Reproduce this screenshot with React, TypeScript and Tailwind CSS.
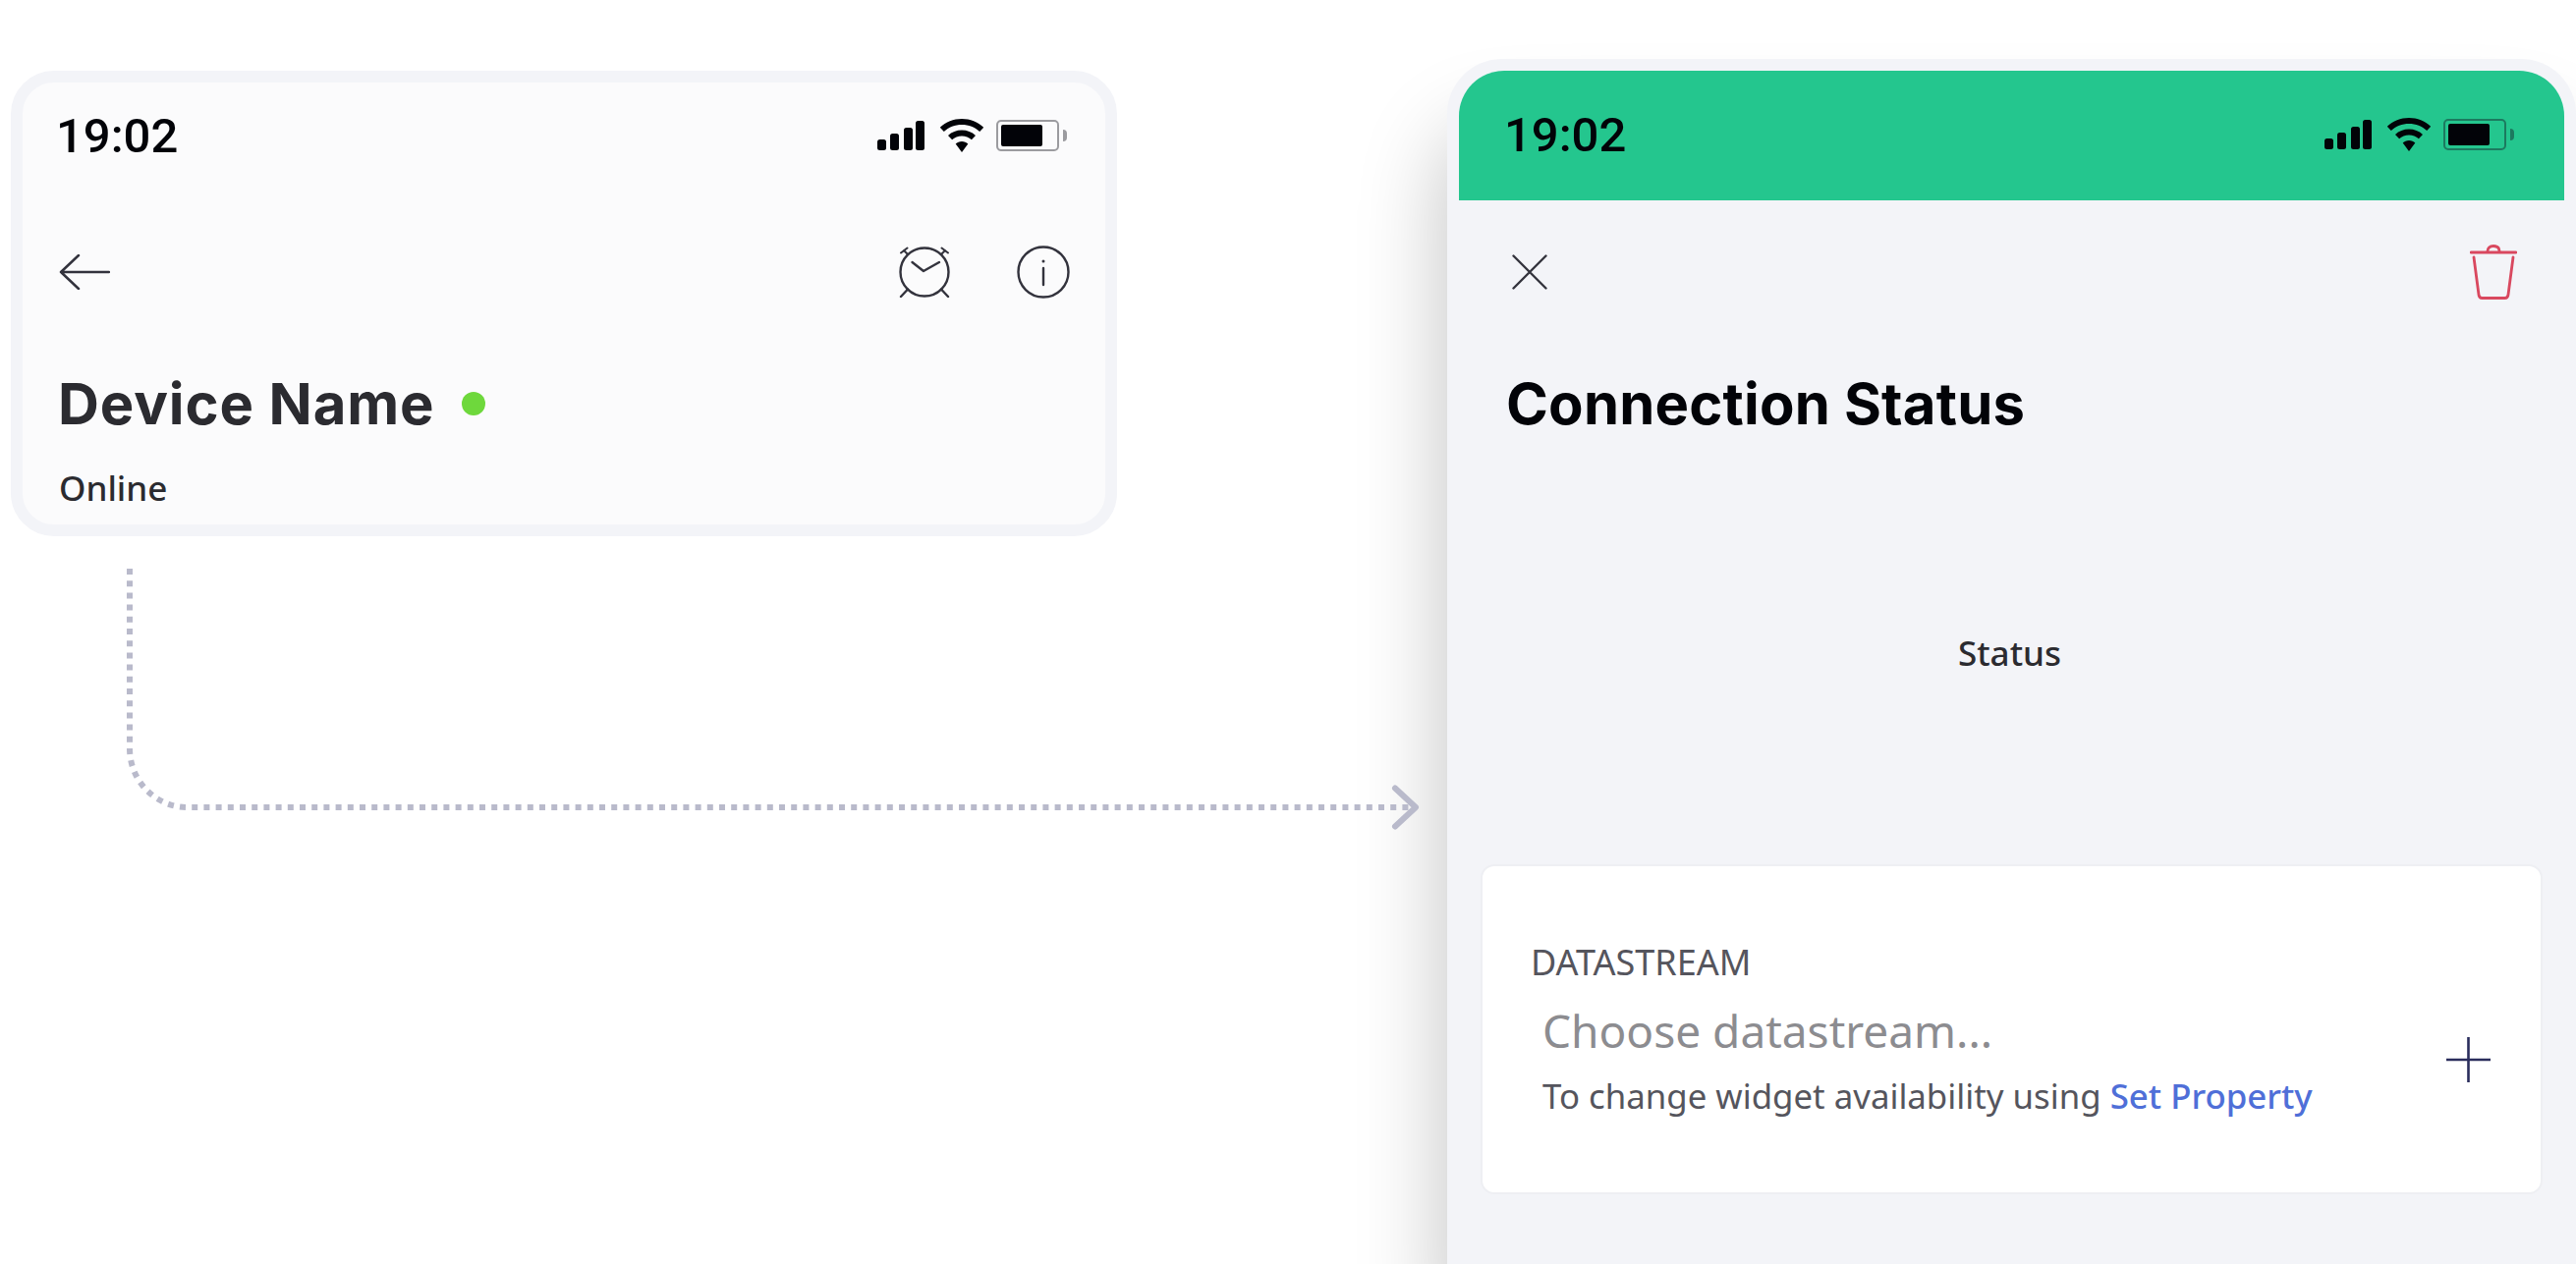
const headingFont = "font-['Inter','Lato',sans-serif]";
const bodyFont = "font-['Noto_Sans','Open_Sans',sans-serif]";

function StatusIcons({ batteryClass, nubClass }: { batteryClass: string; nubClass: string }) {
  return (
    <div className="flex items-center">
      <svg width="48" height="30" viewBox="0 0 48 30" fill="currentColor" className="text-[#020308]">
        <rect x="0" y="19" width="9" height="11" rx="2.5" />
        <rect x="13" y="13" width="9" height="17" rx="2.5" />
        <rect x="27" y="7" width="9" height="23" rx="2.5" />
        <rect x="39" y="0" width="9" height="30" rx="2.5" />
      </svg>
      <svg width="46" height="34" viewBox="0 0 46 34" fill="currentColor" className="ml-[15px] text-[#020308]">
        <path d="M23 0C14.5 0 6.7 3.3.8 8.8l4 4.2C9.6 8.6 16 6 23 6s13.4 2.6 18.2 7l4-4.2C39.3 3.3 31.5 0 23 0z" />
        <path d="M23 11.5c-5.4 0-10.3 2-14 5.4l4.1 4.3c2.6-2.3 6.1-3.7 9.9-3.7s7.3 1.4 9.9 3.7l4.1-4.3c-3.7-3.4-8.6-5.4-14-5.4z" />
        <path d="M23 23c-2.5 0-4.7.9-6.3 2.5L23 34l6.3-8.5C27.7 23.9 25.5 23 23 23z" />
      </svg>
      <div className={`ml-[12px] flex h-[32px] w-[64px] items-center rounded-[5px] border-[2.5px] p-[3px] ${batteryClass}`}>
        <div className="h-full w-[42px] rounded-[2px] bg-[#020308]" />
      </div>
      <div className={`ml-[4px] h-[12px] w-[4px] rounded-r-full ${nubClass}`} />
    </div>
  );
}

function AlarmIcon() {
  return (
    <svg width="52" height="52" viewBox="0 0 52 52" fill="none" stroke="#33333d" strokeWidth="2.4" strokeLinecap="round" strokeLinejoin="round">
      <circle cx="26" cy="26" r="24.5" />
      <path d="M13.5 16L25 25l16-9" />
      <path d="M2 6.500l6.500-5M5 4l4 4M50 6.500l-6.500-5M47 4l-4 4" strokeWidth="2" />
      <path d="M9 43.500L2 51M43 43.500l7 7.500" />
    </svg>
  );
}

function InfoIcon() {
  return (
    <svg width="54" height="54" viewBox="0 0 54 54" fill="none" stroke="#33333d" strokeWidth="2.4" strokeLinecap="round">
      <circle cx="27" cy="27" r="25.5" />
      <path d="M27 23v17" />
      <circle cx="27" cy="16" r="1.5" fill="#33333d" stroke="none" />
    </svg>
  );
}

function BackArrow() {
  return (
    <svg width="52" height="36" viewBox="0 0 52 36" fill="none" stroke="#33333d" strokeWidth="2.5" strokeLinecap="round" strokeLinejoin="round">
      <path d="M2 18h49M20 1L2 18l18 17" />
    </svg>
  );
}

function CloseIcon() {
  return (
    <svg width="36" height="36" viewBox="0 0 36 36" fill="none" stroke="#33333d" strokeWidth="2.4" strokeLinecap="round">
      <path d="M1.500 1.500l33 33M34.500 1.500l-33 33" />
    </svg>
  );
}

function TrashIcon() {
  return (
    <svg width="48" height="56" viewBox="0 0 48 56" fill="none" stroke="#d9485f" strokeWidth="2.8" strokeLinecap="round" strokeLinejoin="round">
      <path d="M1 8h46" />
      <path d="M18 7c0-3.500 2-5.500 6-5.500s6 2 6 5.500" />
      <path d="M4 13l5 38c.2 2 1.500 3.500 3.500 3.500h23c2 0 3.300-1.500 3.500-3.500l5-38" />
    </svg>
  );
}

// dotted line running from the device card over to the widget settings
function Connector() {
  return (
    <svg className="pointer-events-none absolute left-0 top-0" width="1480" height="860" viewBox="0 0 1480 860" fill="none" stroke="#b9bacb">
      <path d="M132 579V762C132 795 158 822 191 822H1434" strokeWidth="6" strokeDasharray="6 6.200" />
      <path d="M1420 802.500l21 19.500-21 19.500" strokeWidth="6" strokeLinecap="round" strokeLinejoin="round" />
    </svg>
  );
}

export default function App() {
  return (
    <div className="relative flex h-[1287px] w-[2622px] items-start overflow-hidden bg-white">
      <div className="ml-[11px] mt-[72px] h-[474px] w-[1126px] shrink-0 rounded-[44px] border-[12px] border-[#f3f4f8] bg-[#fbfbfc]">
        <div className="flex h-[108px] items-center justify-between pl-[34px] pr-[39px]">
          <span className="font-['Roboto',sans-serif] text-[49px] font-medium leading-none text-[#020308]">19:02</span>
          <StatusIcons batteryClass="border-[#9b9b9f]" nubClass="bg-[#9b9b9f]" />
        </div>
        <div className="mt-[57px] flex h-[56px] items-center justify-between pl-[37px] pr-[36px]">
          <BackArrow />
          <div className="flex items-center gap-[68px]">
            <AlarmIcon />
            <InfoIcon />
          </div>
        </div>
        <div className="mt-[71px] flex items-center pl-[36px]">
          <h1 className={`${headingFont} text-[58px] font-bold leading-[70px] tracking-[0.9px] text-[#2b2b30]`}>Device Name</h1>
          <span className="ml-[27px] h-[24px] w-[24px] rounded-full bg-[#6ed83c]" />
        </div>
        <p className={`${bodyFont} mt-[29px] pl-[37px] text-[35px] font-medium leading-[44px] text-[#2b2b30]`}>Online</p>
      </div>

      <div className="ml-[336px] mt-[60px] h-[1227px] w-[1149px] shrink-0 rounded-t-[56px] border-x-[12px] border-t-[12px] border-[#f3f4f8] bg-[#f3f4f8] shadow-[-6px_70px_85px_rgba(0,0,0,0.22)]">
        <div className="flex h-[132px] items-center justify-between rounded-t-[46px] bg-[#24c68e] pb-[2px] pl-[46px] pr-[51px]">
          <span className="font-['Roboto',sans-serif] text-[49px] font-medium leading-none text-[#020308]">19:02</span>
          <StatusIcons batteryClass="border-[#1c7a5f]" nubClass="bg-[#1c7a5f]" />
        </div>
        <div className="flex h-[146px] items-center justify-between pl-[54px] pr-[48px]">
          <CloseIcon />
          <TrashIcon />
        </div>
        <h2 className={`${headingFont} mt-[26px] pl-[48px] text-[58px] font-bold leading-[70px] tracking-[0.2px] text-[#020308]`}>Connection Status</h2>
        <p className={`${bodyFont} mt-[197px] pr-[4px] text-center text-[35px] font-medium leading-[44px] text-[#2b2b30]`}>Status</p>
        <div className="ml-[22px] mt-[193px] flex h-[336px] w-[1081px] items-center justify-between rounded-[14px] border-[2px] border-[#eeeff3] bg-white pl-[49px] pr-[51px]">
          <div>
            <p className={`${bodyFont} text-[36px] leading-[44px] text-[#55555d]`}>DATASTREAM</p>
            <p className={`${bodyFont} mt-[17px] pl-[12px] text-[46px] leading-[60px] text-[#8c8c90]`}>Choose datastream...</p>
            <p className={`${bodyFont} mt-[15px] pl-[12px] text-[34.800px] leading-[44px] text-[#55555d]`}>
              To change widget availability using <span className="font-medium text-[#4f6fd8]">Set Property</span>
            </p>
          </div>
          <svg width="45" height="46" viewBox="0 0 45 46" stroke="#2a2d5c" strokeWidth="2.6" className="mt-[61px]">
            <path d="M22.500 0v46M0 23h45" />
          </svg>
        </div>
      </div>

      <Connector />
    </div>
  );
}
